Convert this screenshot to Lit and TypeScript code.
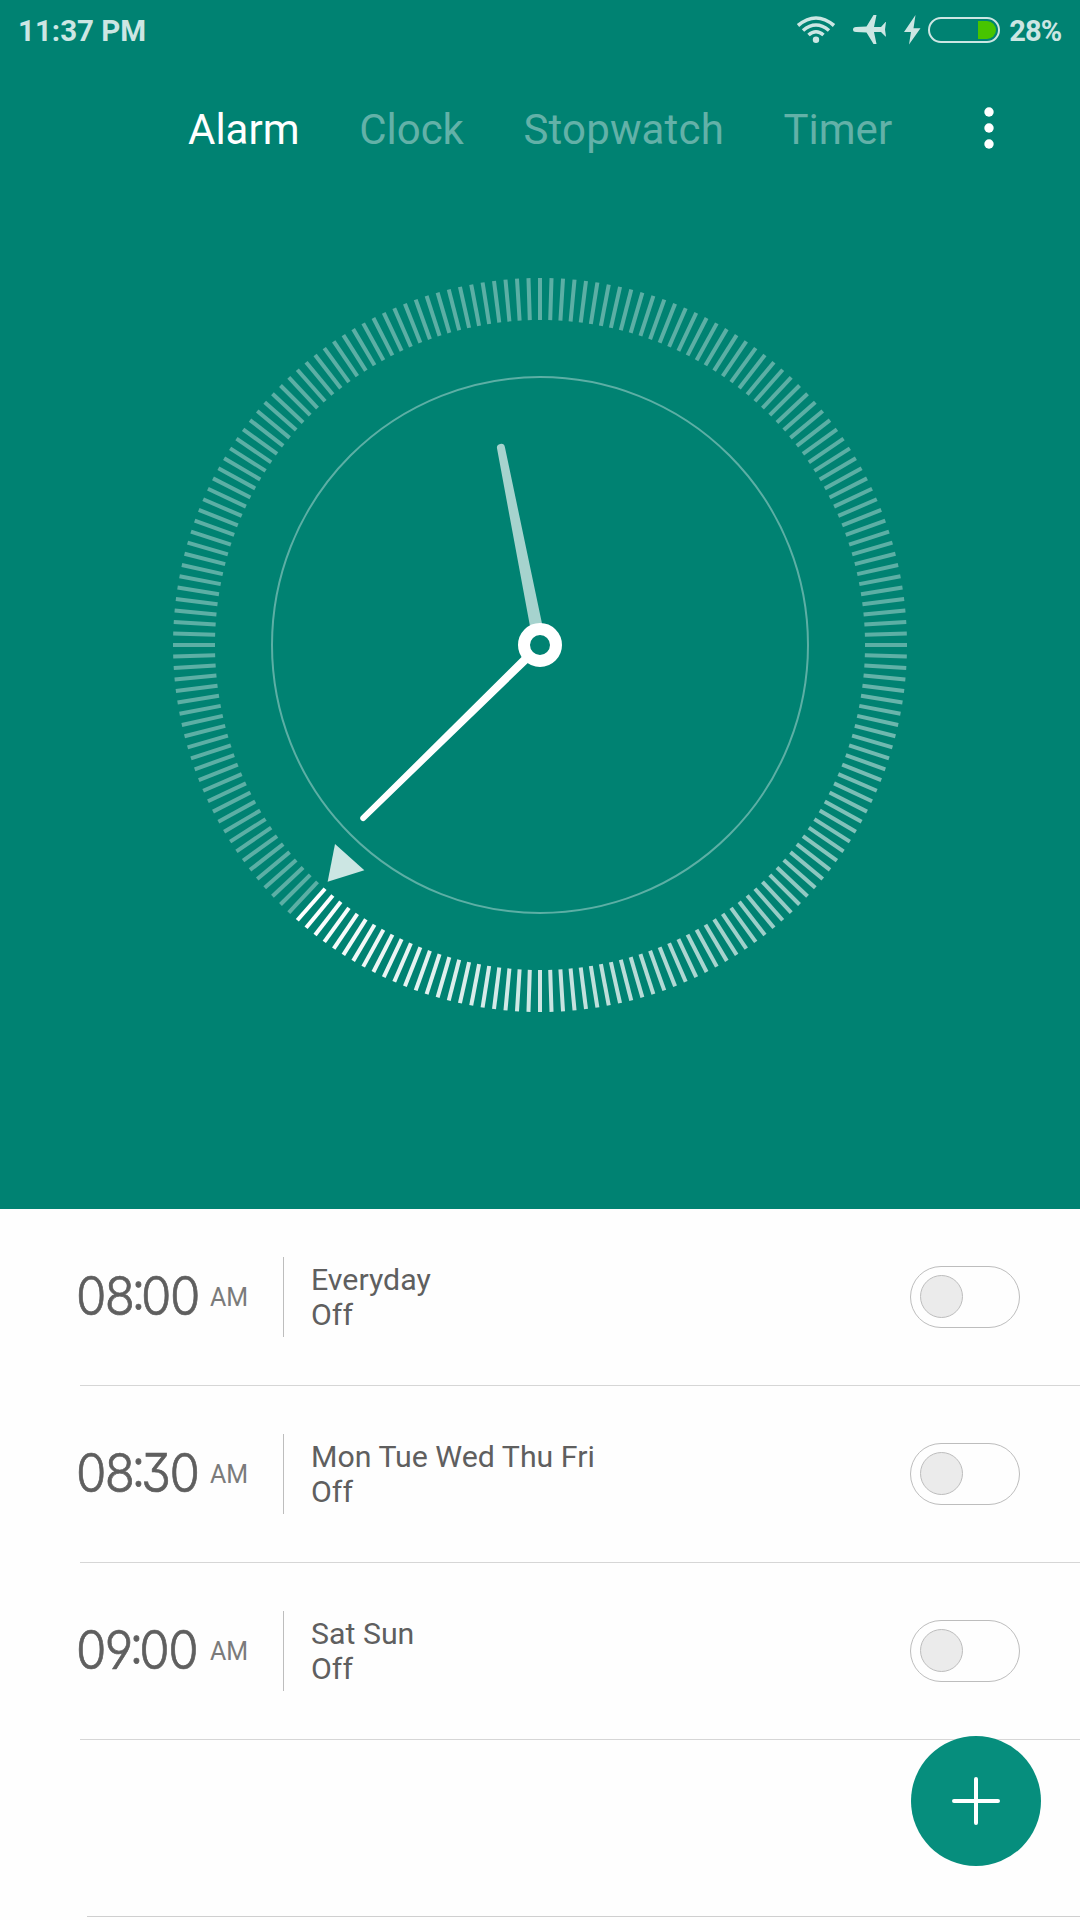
import { LitElement, html, svg, css } from "lit";
import { customElement, property } from "lit/decorators.js";

const TICKS = 200;
const LEAD_TICK = 123;
const TRAIL = 73;

@customElement("status-bar")
class StatusBar extends LitElement {
  static styles = css`
    :host { display: flex; align-items: center; height: 60px; padding: 0 18.5px 0 18px; color: #cce6e3; font: 700 29.5px/60px Roboto, sans-serif; }
    .time { flex: 1; padding-top: 1px; }
    .icons { display: block; width: 206px; height: 60px; margin-right: 9px; }
    .pct { font-size: 29px; letter-spacing: -0.8px; padding-top: 1px; }
  `;
  render() {
    return html`
      <span class="time">11:37 PM</span>
      <svg class="icons" viewBox="794 0 206 60" fill="none" stroke="#cce6e3">
        <g stroke-width="3.6">
          <path d="M798 25.5Q816 10.500 834 25.500"/>
          <path d="M803 30.500Q816 19.500 829 30.500"/>
          <path d="M808.500 35Q816 28.500 823.500 35"/>
        </g>
        <circle cx="816" cy="39.800" r="3.200" fill="#cce6e3" stroke="none"/>
        <path fill="#cce6e3" stroke="none" d="M853 29.500Q853 27 856 27L866.500 26.500L873.500 15L876.500 15L874 27L881 27L885.500 22L886 22L885 29.500L886 36.500L885.500 36.500L881 32L874 32L876.500 44L873.500 44L866.500 32.500L856 32Q853 32 853 29.500Z"/>
        <path fill="#cce6e3" stroke="none" d="M915.500 15L904 32L911 32L909 44.500L920.500 28.300L913.500 28.300Z"/>
        <rect x="929" y="18" width="70" height="24" rx="12" stroke-width="2"/>
        <path fill="#47c400" stroke="none" d="M978 21H987A9 9 0 0 1 987 39H978Z"/>
      </svg>
      <span class="pct">28%</span>
    `;
  }
}

@customElement("tab-bar")
class TabBar extends LitElement {
  static styles = css`
    :host { display: flex; align-items: center; height: 140px; box-sizing: border-box; padding: 0 82.5px 0 188px; font: 400 42px/60px Roboto, sans-serif; color: #63b1a8; }
    .tabs { display: flex; flex: 1; gap: 59.6px; }
    .wide { letter-spacing: 0.15px; }
    .active { color: #fff; }
    .more { display: block; width: 18px; height: 50px; margin-bottom: 5px; }
  `;
  render() {
    return html`
      <nav class="tabs"><span class="active">Alarm</span><span>Clock</span><span class="wide">Stopwatch</span><span>Timer</span></nav>
      <svg class="more" viewBox="0 0 18 50" fill="#fff"><circle cx="9" cy="9" r="4.700"/><circle cx="9" cy="25" r="4.700"/><circle cx="9" cy="41" r="4.700"/></svg>
    `;
  }
}

@customElement("clock-dial")
class ClockDial extends LitElement {
  static styles = css`
    :host { display: block; width: 740px; height: 740px; }
    .dial { display: block; width: 100%; height: 100%; }
  `;
  render() {
    const ticks = Array.from({ length: TICKS }, (_, i) => {
      const back = LEAD_TICK - i;
      const o = back >= 0 && back < TRAIL ? 1 - (0.64 * back) / TRAIL : 0.36;
      return svg`<line y1="-325" y2="-367" stroke-opacity=${o} transform=${`rotate(${i * 1.8})`}/>`;
    });
    return html`
      <svg class="dial" viewBox="-370 -370 740 740" stroke="#fff" fill="none">
        <g stroke-width="4">${ticks}</g>
        <circle r="268" stroke-width="2" stroke-opacity="0.36"/>
        <path transform="rotate(-11.200)" fill="#a6d3ce" stroke="none" d="M-6.200 -18L-4 -201A4 4 0 0 1 4 -201L6.200 -18Z"/>
        <path transform="rotate(225.600)" fill="#fff" stroke="none" d="M-4.300 -18L-2.900 -247.500A2.900 2.900 0 0 1 2.900 -247.500L4.300 -18Z"/>
        <circle r="16" stroke-width="12"/>
        <path transform="rotate(221.900)" fill="#cce6e3" stroke="none" d="M0 -318L19.700 -285H-19.700Z"/>
      </svg>
    `;
  }
}

@customElement("alarm-row")
class AlarmRow extends LitElement {
  @property() time = "";
  @property() days = "";
  static styles = css`
    :host { display: block; height: 177px; box-sizing: border-box; padding-left: 80px; font-family: Roboto, sans-serif; color: #5f5f5f; }
    .row { display: flex; align-items: center; height: 176px; border-bottom: 1px solid #d6d6d6; padding-right: 60px; }
    .clock { width: 130px; flex: none; padding-bottom: 2px; }
    .digits { display: inline-block; margin-left: -4px; white-space: nowrap; font-family: Inter, sans-serif; font-feature-settings: "ss01"; font-size: 53px; font-weight: 300; line-height: 60px; letter-spacing: -1.8px; transform: scaleX(.93); transform-origin: 0 50%; -webkit-text-stroke: .7px #5f5f5f; }
    .colon { font-feature-settings: "case"; letter-spacing: -4.5px; margin-left: -2px; }
    .am { width: 73px; flex: none; font-size: 25px; line-height: 30px; color: #7b7b7b; padding-top: 2px; box-sizing: border-box; }
    .info { flex: 1; border-left: 1px solid #bdbdbd; height: 80px; padding: 5px 0 0 27px; box-sizing: border-box; font-size: 30.3px; line-height: 35px; }
    .toggle { width: 110px; height: 62px; border: 1px solid #bdbdbd; border-radius: 31px; box-sizing: border-box; padding: 8px 9px; }
    .knob { width: 43px; height: 43px; border: 1px solid #bdbdbd; border-radius: 50%; background: #ebebeb; box-sizing: border-box; }
  `;
  render() {
    const [h, m] = this.time.split(":");
    return html`
      <div class="row">
        <div class="clock"><span class="digits">${h}<span class="colon">:</span>${m}</span></div>
        <div class="am">AM</div>
        <div class="info"><div>${this.days}</div><div>Off</div></div>
        <div class="toggle"><div class="knob"></div></div>
      </div>
    `;
  }
}

@customElement("app-root")
class AppRoot extends LitElement {
  static styles = css`
    :host { display: block; position: relative; width: 1080px; height: 1920px; overflow: hidden; background: #fefefe; }
    .hero { height: 1209px; background: #008272; display: flex; flex-direction: column; }
    .dial { align-self: center; margin-top: 75px; }
    .end { margin-left: 87px; height: 177px; border-bottom: 1px solid #cfcfcf; box-sizing: border-box; }
    .fab { position: absolute; left: 911px; top: 1736px; width: 130px; height: 130px; border-radius: 50%; background: #068e7d; }
    .plus { display: block; width: 130px; height: 130px; }
  `;
  render() {
    return html`
      <div class="hero">
        <status-bar></status-bar>
        <tab-bar></tab-bar>
        <clock-dial class="dial"></clock-dial>
      </div>
      <alarm-row time="08:00" days="Everyday"></alarm-row>
      <alarm-row time="08:30" days="Mon Tue Wed Thu Fri"></alarm-row>
      <alarm-row time="09:00" days="Sat Sun"></alarm-row>
      <div class="end"></div>
      <div class="fab">
        <svg class="plus" viewBox="0 0 130 130" stroke="#fff" stroke-width="4" stroke-linecap="round"><path d="M65 43V87M43 65H87"/></svg>
      </div>
    `;
  }
}
